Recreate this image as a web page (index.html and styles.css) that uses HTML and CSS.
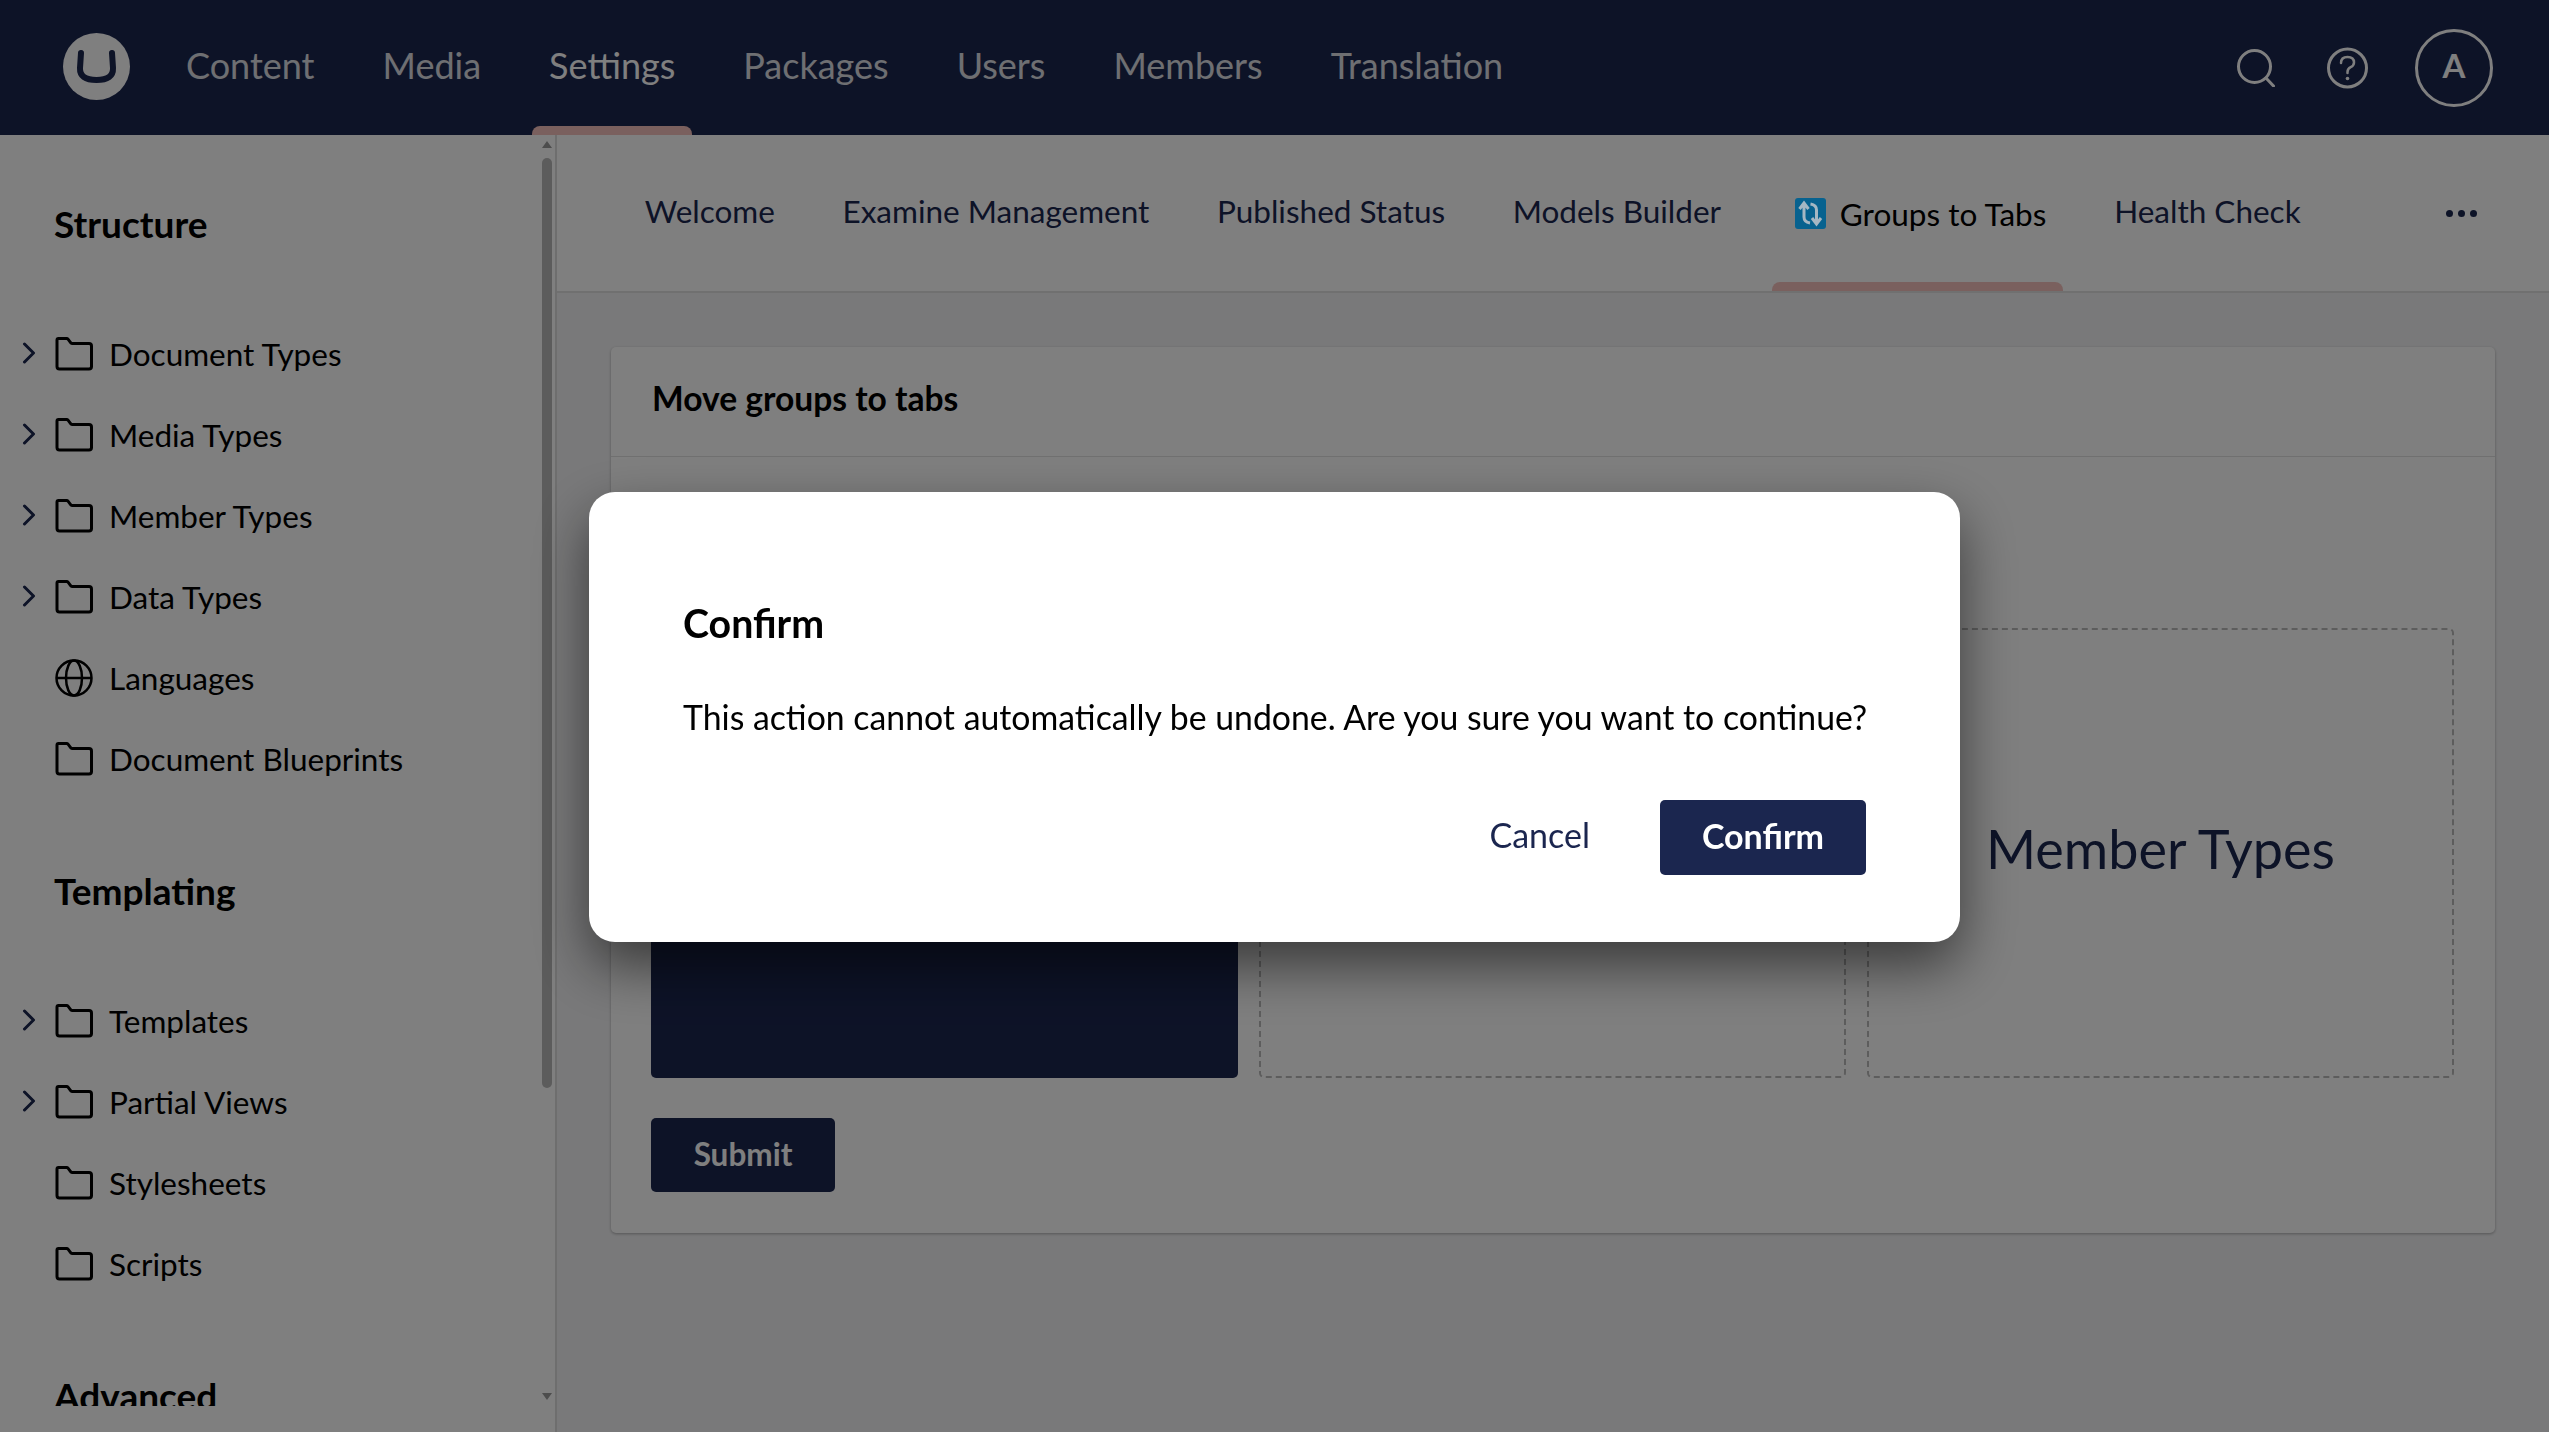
FILE: index.html
```html
<!DOCTYPE html>
<html lang="en">
<head>
  <meta charset="UTF-8" />
  <title>Settings - Groups to Tabs</title>
  <link rel="stylesheet" href="styles.css">
</head>
<body>
  <svg class="defs" width="0" height="0">
    <symbol id="folder" viewBox="0 0 38 34">
      <path d="M2 7V3q0-1.500 1.500-1.500h8q1 0 1.700 .9l2.600 3.400q.6 .7 1.700 .7H34q2.500 0 2.500 2.500V29.500q0 2.500-2.500 2.500H4.500Q2 32 2 29.500Z" fill="none" stroke="currentColor" stroke-width="3" stroke-linejoin="round"/>
    </symbol>
    <symbol id="chevron" viewBox="0 0 14 22">
      <path d="M2.500 2 11.500 11 2.500 20" fill="none" stroke="currentColor" stroke-width="3" stroke-linecap="round" stroke-linejoin="round"/>
    </symbol>
  </svg>

  <header class="topbar">
    <svg class="logo" viewBox="0 0 67 67">
      <circle cx="33.500" cy="33.500" r="33.500" fill="#fff"/>
      <path d="M18 20 17 35Q16.500 47 33.500 47T50 35L49 20" fill="none" stroke="#1b264f" stroke-width="6" stroke-linecap="round"/>
    </svg>
    <nav class="main-nav">
      <a>Content</a>
      <a>Media</a>
      <a class="active">Settings</a>
      <a>Packages</a>
      <a>Users</a>
      <a>Members</a>
      <a>Translation</a>
    </nav>
    <div class="top-tools">
      <svg class="tool-search" viewBox="0 0 38 38">
        <circle cx="17.500" cy="17.500" r="16" fill="none" stroke="currentColor" stroke-width="3"/>
        <path d="M29 29 36.500 37" fill="none" stroke="currentColor" stroke-width="3" stroke-linecap="round"/>
      </svg>
      <svg class="tool-help" viewBox="0 0 41 42">
        <circle cx="20.500" cy="21" r="19" fill="none" stroke="currentColor" stroke-width="3"/>
        <path d="M14 16q0-6 6.500-6t6.500 5.500q0 3-3.300 4.700-3.200 1.600-3.200 4.800v1" fill="none" stroke="currentColor" stroke-width="2.500" stroke-linecap="round"/>
        <circle cx="20.500" cy="31.500" r="1.800" fill="currentColor"/>
      </svg>
      <div class="avatar">A</div>
    </div>
  </header>

  <div class="workspace">
    <aside class="sidebar">
      <div class="tree">
        <h3 class="tree-title">Structure</h3>
        <div class="tree-group">
          <div class="tree-item"><svg class="chevron"><use href="#chevron"/></svg><svg class="folder"><use href="#folder"/></svg>Document Types</div>
          <div class="tree-item"><svg class="chevron"><use href="#chevron"/></svg><svg class="folder"><use href="#folder"/></svg>Media Types</div>
          <div class="tree-item"><svg class="chevron"><use href="#chevron"/></svg><svg class="folder"><use href="#folder"/></svg>Member Types</div>
          <div class="tree-item"><svg class="chevron"><use href="#chevron"/></svg><svg class="folder"><use href="#folder"/></svg>Data Types</div>
          <div class="tree-item no-arrow">
            <svg class="globe" viewBox="0 0 38 38">
              <g fill="none" stroke="currentColor" stroke-width="2.500">
                <circle cx="19" cy="19" r="17.500"/>
                <ellipse cx="19" cy="19" rx="8" ry="17.500"/>
                <path d="M1.500 19H36.500"/>
              </g>
            </svg>Languages
          </div>
          <div class="tree-item no-arrow"><svg class="folder"><use href="#folder"/></svg>Document Blueprints</div>
        </div>

        <h3 class="tree-title">Templating</h3>
        <div class="tree-group">
          <div class="tree-item"><svg class="chevron"><use href="#chevron"/></svg><svg class="folder"><use href="#folder"/></svg>Templates</div>
          <div class="tree-item"><svg class="chevron"><use href="#chevron"/></svg><svg class="folder"><use href="#folder"/></svg>Partial Views</div>
          <div class="tree-item no-arrow"><svg class="folder"><use href="#folder"/></svg>Stylesheets</div>
          <div class="tree-item no-arrow"><svg class="folder"><use href="#folder"/></svg>Scripts</div>
        </div>

        <h3 class="tree-title">Advanced</h3>
      </div>
      <div class="scrollbar">
        <span class="arrow-up"></span>
        <span class="thumb"></span>
        <span class="arrow-down"></span>
      </div>
    </aside>

    <main class="content">
      <div class="tabs">
        <a>Welcome</a>
        <a>Examine Management</a>
        <a>Published Status</a>
        <a>Models Builder</a>
        <a class="active">
          <svg class="tab-icon" viewBox="0 0 31 31">
            <rect width="31" height="31" rx="3" fill="#07628f"/>
            <path d="M4.500 11 9 5l4.500 6M9 6V19q0 5 6 6" fill="none" stroke="#a5b7c3" stroke-width="3"/>
            <path d="M17 20l4.500 6 4.500-6M21.500 25V12q0-5-6-6" fill="none" stroke="#a5b7c3" stroke-width="3"/>
          </svg>Groups to Tabs
        </a>
        <a>Health Check</a>
        <span class="more"><i></i><i></i><i></i></span>
      </div>

      <section class="card">
        <div class="card-head">Move groups to tabs</div>
        <div class="card-body">
          <div class="type-grid">
            <div class="type-box selected"></div>
            <div class="type-box"></div>
            <div class="type-box">Member Types</div>
          </div>
          <button class="btn">Submit</button>
        </div>
      </section>
    </main>
  </div>

  <div class="overlay">
    <div class="dialog">
      <h4>Confirm</h4>
      <p>This action cannot automatically be undone. Are you sure you want to continue?</p>
      <div class="dialog-actions">
        <button class="btn-link">Cancel</button>
        <button class="btn">Confirm</button>
      </div>
    </div>
  </div>
</body>
</html>
```

FILE: styles.css
```css
* {
  box-sizing: border-box;
}

html, body {
  margin: 0;
  height: 100%;
  overflow: hidden;
}

body {
  display: flex;
  flex-direction: column;
  font-family: Lato, "Open Sans", sans-serif;
  font-variant-ligatures: common-ligatures;
  font-feature-settings: "liga" 1;
  color: #000;
  background: #fff;
}

.defs {
  position: absolute;
}

/* top bar */
.topbar {
  flex: 0 0 135px;
  display: flex;
  align-items: center;
  background: #1b264f;
  color: #fff;
  padding: 0 56px 3px 63px;
}

.logo {
  width: 67px;
  height: 67px;
  flex: none;
}

.main-nav {
  display: flex;
  align-self: stretch;
  margin-left: 22px;
}

.main-nav a {
  position: relative;
  display: flex;
  align-items: center;
  padding: 0 34px 3px;
  font-size: 36px;
  opacity: .85;
}

.main-nav a.active {
  opacity: 1;
}

.main-nav a.active:after {
  content: "";
  position: absolute;
  left: 17px;
  right: 17px;
  bottom: -3px;
  height: 9px;
  background: #f5c1bc;
  border-radius: 8px 8px 0 0;
}

.top-tools {
  margin-left: auto;
  margin-top: 4px;
  display: flex;
  align-items: center;
}

.tool-search {
  width: 38px;
  height: 38px;
  margin-right: 52px;
}

.tool-help {
  width: 41px;
  height: 42px;
  margin-right: 47px;
}

.avatar {
  width: 78px;
  height: 78px;
  border: 3px solid #fff;
  border-radius: 50%;
  display: flex;
  align-items: center;
  justify-content: center;
  font-size: 33px;
  font-weight: 700;
  padding-bottom: 6px;
}

/* sidebar */
.workspace {
  flex: 1;
  display: flex;
  min-height: 0;
}

.sidebar {
  flex: 0 0 557px;
  display: flex;
  align-items: flex-start;
  border-right: 2px solid #ddd;
  background: #fff;
}

.tree {
  flex: 1;
  height: 1271px;
  overflow: hidden;
  padding-top: 66px;
}

.tree-title {
  margin: 0 0 66px 54px;
  font-size: 37px;
  line-height: 46px;
  font-weight: 700;
}

.tree-group {
  margin-bottom: 69px;
}

.tree-item {
  display: flex;
  align-items: center;
  height: 81px;
  font-size: 31.5px;
  color: #000;
}

.chevron {
  width: 14px;
  height: 22px;
  margin: -2px 19px 0 22px;
  color: #1b264f;
  flex: none;
}

.folder {
  width: 38px;
  height: 34px;
  margin-right: 16px;
  flex: none;
}

.globe {
  width: 38px;
  height: 38px;
  margin-right: 16px;
  flex: none;
}

.no-arrow {
  padding-left: 55px;
}

.scrollbar {
  flex: 0 0 10px;
  height: 1273px;
  margin-right: 3px;
  display: flex;
  flex-direction: column;
  align-items: center;
  padding: 6px 0 8px;
}

.arrow-up, .arrow-down {
  width: 0;
  height: 0;
  border-left: 5px solid transparent;
  border-right: 5px solid transparent;
}

.arrow-up {
  border-bottom: 7px solid #9a9a9a;
}

.arrow-down {
  margin-top: auto;
  border-top: 7px solid #9a9a9a;
}

.thumb {
  width: 10px;
  height: 930px;
  margin-top: 10px;
  border-radius: 5px;
  background: #b8b8b8;
}

/* main */
.content {
  flex: 1;
  background: #f3f3f5;
}

.tabs {
  display: flex;
  align-items: center;
  height: 158px;
  padding: 0 72px 0 54px;
  background: #fff;
  border-bottom: 2px solid #e0e0e0;
  position: relative;
}

.tabs a {
  position: relative;
  display: flex;
  align-items: center;
  align-self: stretch;
  padding: 0 33.8px 5px;
  font-size: 31.5px;
  color: #1b264f;
}

.tabs a.active {
  color: #000;
  margin: 0 17px;
  padding: 5px 17px 4px 23px;
}

.tabs a.active:after {
  content: "";
  position: absolute;
  left: 0;
  right: 0;
  bottom: 0;
  height: 9px;
  background: #f5c1bc;
  border-radius: 8px 8px 0 0;
}

/* this icon keeps its full colour above the dimmed page */
.tab-icon {
  position: relative;
  z-index: 2;
  width: 31px;
  height: 31px;
  margin-right: 14px;
  flex: none;
}

.more {
  margin-left: auto;
  display: flex;
  gap: 5px;
}

.more i {
  width: 7px;
  height: 7px;
  border-radius: 50%;
  background: #1b264f;
}

.card {
  margin: 54px 54px 0 54px;
  background: #fff;
  border-radius: 5px;
  box-shadow: 0 1px 3px rgba(0, 0, 0, .3);
  height: 886px;
}

.card-head {
  height: 110px;
  padding: 0 41px 8px;
  display: flex;
  align-items: center;
  font-size: 33.6px;
  font-weight: 700;
  border-bottom: 1px solid #e0e0e0;
}

.card-body {
  padding: 171px 41px 0 40px;
}

.type-grid {
  display: grid;
  grid-template-columns: repeat(3, 1fr);
  gap: 21px;
  height: 450px;
}

.type-box {
  display: flex;
  align-items: center;
  justify-content: center;
  border: 2px dashed #bbb;
  border-radius: 5px;
  font-size: 54px;
  color: #1b264f;
  padding-bottom: 10px;
}

.type-box.selected {
  background: #1b264f;
  border: 0;
  color: #fff;
}

.btn {
  display: block;
  height: 74px;
  padding: 0 0 3px;
  width: 184px;
  margin-top: 40px;
  border: 0;
  border-radius: 5px;
  background: #1b264f;
  color: #fff;
  font: 700 31.5px Lato, sans-serif;
}

/* confirm dialog */
.overlay {
  position: fixed;
  inset: 0;
  z-index: 1;
  display: flex;
  align-items: center;
  justify-content: center;
  padding-top: 1px;
  background: rgba(0, 0, 0, .5);
}

.dialog {
  width: 1371px;
  height: 450px;
  padding: 106px 94px 0;
  background: #fff;
  border-radius: 26px;
  box-shadow: 0 24px 56px rgba(0, 0, 0, .55);
}

.dialog h4 {
  margin: 0;
  font-size: 39.3px;
  line-height: 50px;
  font-weight: 700;
}

.dialog p {
  margin: 47px 0 0;
  font-size: 33.8px;
  line-height: 44px;
  white-space: nowrap;
}

.dialog-actions {
  display: flex;
  justify-content: flex-end;
  align-items: center;
  margin-top: 61px;
}

.dialog-actions .btn {
  margin-top: 0;
  width: 206px;
  height: 75px;
  padding: 0 0 4px;
  font-size: 34px;
}

.btn-link {
  border: 0;
  background: none;
  font: 34px Lato, sans-serif;
  color: #1b264f;
  margin-right: 70px;
  padding: 0 0 6px;
}
```
